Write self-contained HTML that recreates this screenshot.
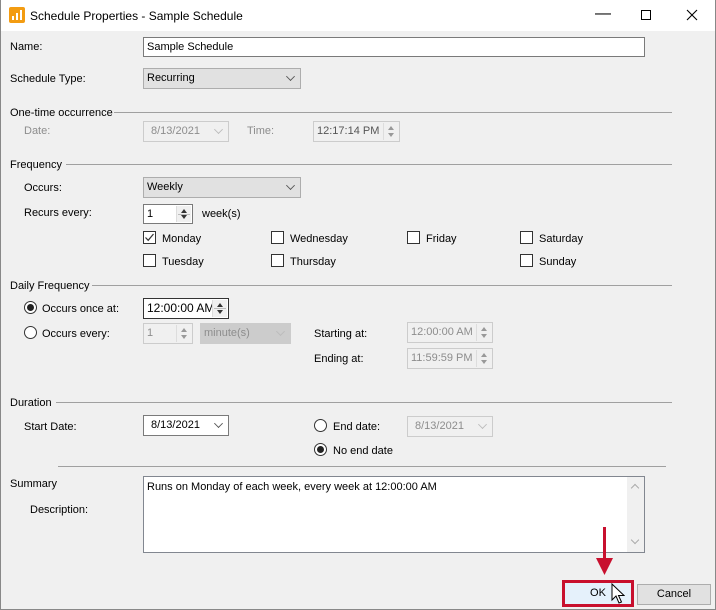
<!DOCTYPE html>
<html><head><style>
*{box-sizing:border-box;margin:0;padding:0}
body{width:716px;height:610px;background:#f0f0f0;font-family:"Liberation Sans",sans-serif;font-size:11px;color:#000;position:relative;overflow:hidden}
.a{position:absolute;white-space:nowrap;line-height:14px}
.g{color:#8d8d8d}
.box{position:absolute;background:#fff;border:1px solid #7a7a7a;height:21px;line-height:19px;padding-left:3px;white-space:nowrap;overflow:hidden}
.dis{border-color:#ccc;color:#8d8d8d;background:#f0f0f0}
.dd{position:absolute;background:#e1e1e1;border:1px solid #adadad;height:21px;line-height:19px;padding-left:3px}
.chev{position:absolute;right:6px;top:4px;width:7px;height:7px;border-right:1px solid #555;border-bottom:1px solid #555;transform:rotate(45deg) scale(.9)}
.chev.l{border-color:#bbb}
.line{position:absolute;height:1px;background:#a0a0a0}
.spin{position:absolute;right:1px;top:1px;width:15px;bottom:1px;background:#f0f0f0;border-left:1px solid #ddd}
.spin:before{content:"";position:absolute;left:4px;top:3px;border:3px solid transparent;border-bottom:4px solid #333;border-top:0}
.spin:after{content:"";position:absolute;left:4px;bottom:3px;border:3px solid transparent;border-top:4px solid #333;border-bottom:0}
.spin.l:before{border-bottom-color:#999}.spin.l:after{border-top-color:#999}
.spin i{position:absolute;left:1px;right:1px;top:8px;height:1px;background:#bbb}
.cb{position:absolute;width:13px;height:13px;border:1px solid #333;background:#fff}
.rb{position:absolute;width:13px;height:13px;border:1px solid #333;border-radius:50%;background:#fff}
.rb.on:after{content:"";position:absolute;left:2px;top:2px;width:7px;height:7px;border-radius:50%;background:#222}
</style></head><body>
<div style="position:absolute;left:0;top:0;width:716px;height:31px;background:#fff"></div>
<div style="position:absolute;left:0;top:0;width:1px;height:610px;background:#888"></div>
<div style="position:absolute;right:0;top:0;width:1px;height:610px;background:#888"></div>
<div style="position:absolute;left:0;bottom:0;width:716px;height:1px;background:#888"></div>
<svg style="position:absolute;left:9px;top:7px" width="16" height="16"><rect width="16" height="16" rx="2" fill="#f39c12"/><rect x="3" y="9" width="2" height="4" fill="#fff"/><rect x="7" y="6" width="2" height="7" fill="#fff"/><rect x="11" y="3" width="2" height="10" fill="#fff"/></svg>
<div class="a" style="left:30px;top:9px;font-size:12px">Schedule Properties - Sample Schedule</div>
<div class="a" style="left:595px;top:7px;font-size:16px">&#8212;</div>
<div style="position:absolute;left:641px;top:10px;width:10px;height:10px;border:1px solid #000"></div>
<svg style="position:absolute;left:686px;top:9px" width="12" height="12"><path d="M1 1L11 11M11 1L1 11" stroke="#000" stroke-width="1.1"/></svg>

<div class="a" style="left:10px;top:40px">Name:</div>
<div class="box" style="left:143px;top:37px;width:502px;height:20px;line-height:18px">Sample Schedule</div>
<div class="a" style="left:10px;top:72px">Schedule Type:</div>
<div class="dd" style="left:143px;top:68px;width:158px">Recurring<span class="chev"></span></div>

<div class="a" style="left:10px;top:106px">One-time occurrence</div>
<div class="line" style="left:114px;top:112px;width:558px"></div>
<div class="a g" style="left:24px;top:124px">Date:</div>
<div class="box dis" style="left:143px;top:121px;width:86px;padding-left:7px">8/13/2021<span class="chev l"></span></div>
<div class="a g" style="left:247px;top:124px">Time:</div>
<div class="box dis" style="left:313px;top:121px;width:87px;color:#555">12:17:14 PM<span class="spin l"></span></div>

<div class="a" style="left:10px;top:158px">Frequency</div>
<div class="line" style="left:66px;top:164px;width:606px"></div>
<div class="a" style="left:24px;top:181px">Occurs:</div>
<div class="dd" style="left:143px;top:177px;width:158px">Weekly<span class="chev"></span></div>
<div class="a" style="left:24px;top:206px">Recurs every:</div>
<div class="box" style="left:143px;top:204px;width:50px;height:20px;line-height:18px">1<span class="spin"><i></i></span></div>
<div class="a" style="left:202px;top:207px">week(s)</div>

<div class="cb" style="left:143px;top:231px"><svg width="11" height="11" style="position:absolute;left:0;top:0"><path d="M1.5 5.5L4.2 8.3L9.5 2" fill="none" stroke="#333" stroke-width="1.2"/></svg></div>
<div class="a" style="left:162px;top:232px">Monday</div>
<div class="cb" style="left:271px;top:231px"></div><div class="a" style="left:290px;top:232px">Wednesday</div>
<div class="cb" style="left:407px;top:231px"></div><div class="a" style="left:426px;top:232px">Friday</div>
<div class="cb" style="left:520px;top:231px"></div><div class="a" style="left:539px;top:232px">Saturday</div>
<div class="cb" style="left:143px;top:254px"></div><div class="a" style="left:162px;top:255px">Tuesday</div>
<div class="cb" style="left:271px;top:254px"></div><div class="a" style="left:290px;top:255px">Thursday</div>
<div class="cb" style="left:520px;top:254px"></div><div class="a" style="left:539px;top:255px">Sunday</div>

<div class="a" style="left:10px;top:279px">Daily Frequency</div>
<div class="line" style="left:92px;top:285px;width:580px"></div>
<div class="rb on" style="left:24px;top:301px"></div><div class="a" style="left:42px;top:302px">Occurs once at:</div>
<div class="box" style="left:143px;top:298px;width:86px;border-color:#333;font-size:12px">12:00:00 AM<span class="spin"><i></i></span></div>
<div class="rb" style="left:24px;top:326px"></div><div class="a" style="left:42px;top:327px">Occurs every:</div>
<div class="box dis" style="left:143px;top:323px;width:50px">1<span class="spin l"></span></div>
<div class="dd" style="left:200px;top:323px;width:91px;background:#ccc;border-color:#ccc;color:#8d8d8d">minute(s)<span class="chev l"></span></div>
<div class="a" style="left:314px;top:327px">Starting at:</div>
<div class="box dis" style="left:407px;top:322px;width:86px">12:00:00 AM<span class="spin l"></span></div>
<div class="a" style="left:314px;top:352px">Ending at:</div>
<div class="box dis" style="left:407px;top:348px;width:86px">11:59:59 PM<span class="spin l"></span></div>

<div class="a" style="left:10px;top:396px">Duration</div>
<div class="line" style="left:56px;top:402px;width:616px"></div>
<div class="a" style="left:24px;top:420px">Start Date:</div>
<div class="box" style="left:143px;top:415px;width:86px;padding-left:7px">8/13/2021<span class="chev"></span></div>
<div class="rb" style="left:314px;top:419px"></div><div class="a" style="left:333px;top:420px">End date:</div>
<div class="box dis" style="left:407px;top:416px;width:86px;padding-left:7px">8/13/2021<span class="chev l"></span></div>
<div class="rb on" style="left:314px;top:443px"></div><div class="a" style="left:333px;top:444px">No end date</div>

<div class="line" style="left:58px;top:466px;width:608px"></div>
<div class="a" style="left:10px;top:477px">Summary</div>
<div class="a" style="left:30px;top:503px">Description:</div>
<div class="box" style="left:143px;top:476px;width:502px;height:77px;border-color:#828790;line-height:14px;padding-top:3px">Runs on Monday of each week, every week at 12:00:00 AM
<div style="position:absolute;right:0;top:0;width:17px;bottom:0;background:#f0f0f0"><div style="position:absolute;left:5px;top:8px;width:6px;height:6px;border-left:1px solid #aaa;border-top:1px solid #aaa;transform:rotate(45deg)"></div><div style="position:absolute;left:5px;bottom:9px;width:6px;height:6px;border-right:1px solid #aaa;border-bottom:1px solid #aaa;transform:rotate(45deg)"></div></div></div>

<div style="position:absolute;left:603px;top:527px;width:3px;height:34px;background:#c8102e"></div>
<svg style="position:absolute;left:596px;top:558px" width="18" height="18"><path d="M0 0H17L8.5 17Z" fill="#c8102e"/></svg>
<div style="position:absolute;left:562px;top:580px;width:72px;height:27px;border:3px solid #c8102e;background:#e5f1fb;text-align:center;line-height:21px">OK</div>
<svg style="position:absolute;left:611px;top:583px" width="14" height="22"><path d="M1 1V17L5 13L8 20L10.5 19L7.5 12.5H13Z" fill="#fff" stroke="#000" stroke-width="1"/></svg>
<div style="position:absolute;left:637px;top:584px;width:74px;height:21px;border:1px solid #adadad;background:#e1e1e1;text-align:center;line-height:19px">Cancel</div>
</body></html>
